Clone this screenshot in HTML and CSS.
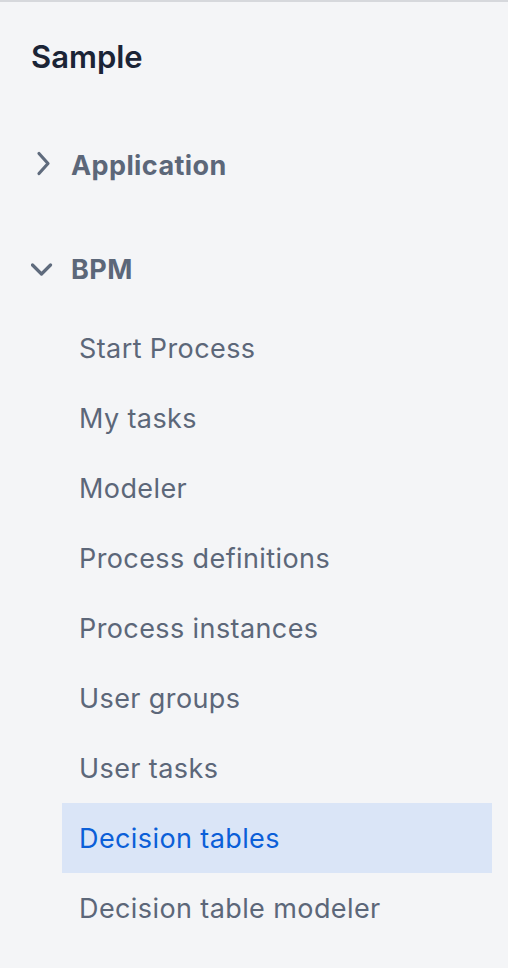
FILE: index.html
```html
<!DOCTYPE html>
<html>
<head>
<meta charset="utf-8">
<link rel="stylesheet" href="styles.css">
</head>
<body>
<nav class="sidebar">
  <h1 class="title">Sample</h1>
  <div class="section">
    <div class="section-head">
      <svg class="chev" width="24" height="30" viewBox="0 0 24 30"><path d="M8 3.5 L17 13.5 L8 23.5" fill="none" stroke="#5f6b7d" stroke-width="3.2" stroke-linecap="round" stroke-linejoin="round"/></svg>
      <span>Application</span>
    </div>
  </div>
  <div class="section section-open">
    <div class="section-head">
      <svg class="chev" width="24" height="30" viewBox="0 0 24 30"><path d="M1.5 11 L10.5 20 L19.5 11" fill="none" stroke="#5f6b7d" stroke-width="3.2" stroke-linecap="round" stroke-linejoin="round"/></svg>
      <span>BPM</span>
    </div>
    <ul class="items">
      <li class="item">Start Process</li>
      <li class="item">My tasks</li>
      <li class="item">Modeler</li>
      <li class="item">Process definitions</li>
      <li class="item">Process instances</li>
      <li class="item">User groups</li>
      <li class="item">User tasks</li>
      <li class="item item-active">Decision tables</li>
      <li class="item">Decision table modeler</li>
    </ul>
  </div>
</nav>
</body>
</html>
```
FILE: styles.css
```css
html, body {
  margin: 0;
  padding: 0;
  background: #f4f5f7;
}
body {
  border-top: 2px solid #d6d8dc;
  font-family: Inter, "Noto Sans", sans-serif;
  height: 966px;
  overflow: hidden;
}
.sidebar {
  display: flex;
  flex-direction: column;
  padding: 37px 16px 0 31px;
}
.title {
  margin: 0;
  font-size: 31px;
  line-height: 36px;
  font-weight: 600;
  color: #1b2436;
}
.section {
  margin-top: 64px;
}
.section-open {
  margin-top: 52px;
}
.section-head {
  display: flex;
  align-items: center;
  height: 52px;
  gap: 16px;
  font-size: 27px;
  font-weight: 700;
  letter-spacing: 0.4px;
  color: #5c6779;
}
.chev {
  display: block;
  flex: none;
}
.items {
  list-style: none;
  margin: 18px 0 0 31px;
  padding: 0;
}
.item {
  height: 70px;
  display: flex;
  align-items: center;
  padding-left: 17px;
  font-size: 27px;
  letter-spacing: 0.4px;
  color: #5c6779;
}
.item-active {
  background: #dae5f7;
  color: #0b5fd8;
}
```
